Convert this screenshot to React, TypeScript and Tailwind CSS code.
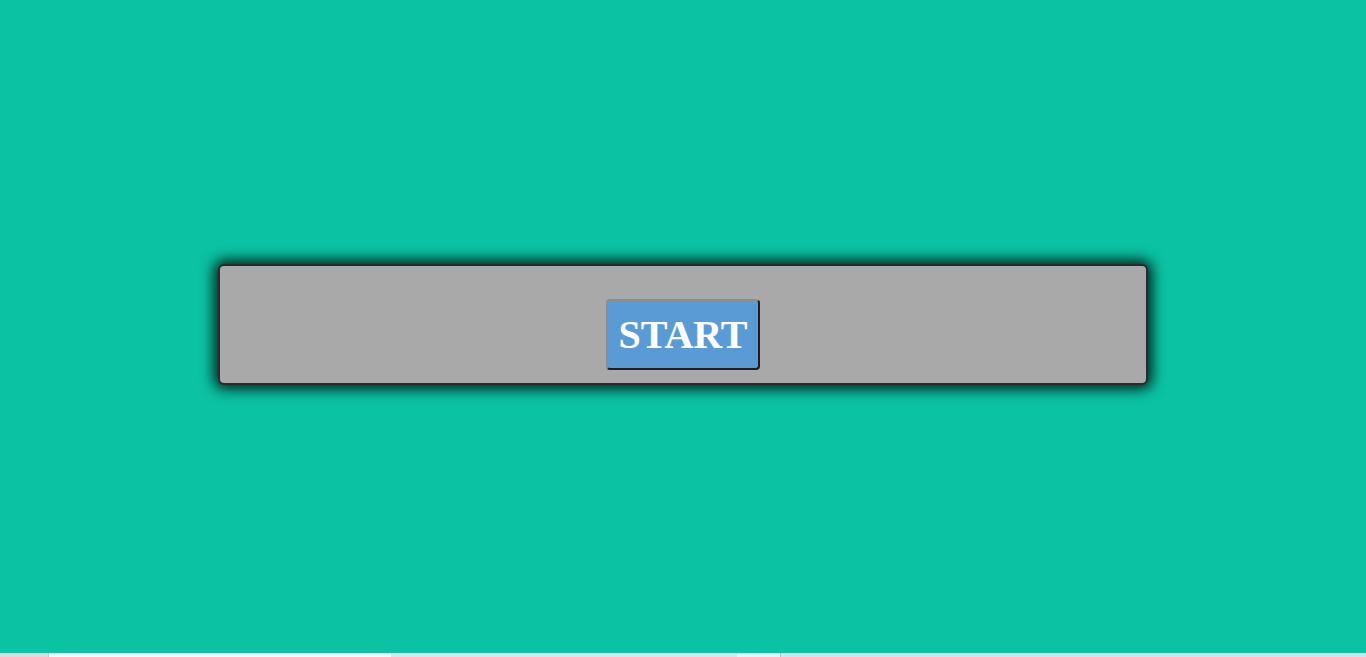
export default function App() {
  return (
    <div className="min-h-screen bg-[#0bc2a3] overflow-hidden">
      <section className="h-[653px] flex items-center justify-center pb-[4px]">
        <div className="w-[930px] h-[121px] bg-[#a9a9a9] border-2 border-[#2a2a2a] rounded-[6px] shadow-[0_0_14px_4px_rgba(0,0,0,0.85)] flex justify-center pt-[33px]">
          <button
            type="button"
            className="h-[71px] px-[10px] bg-[#5b9bd5] text-white font-bold text-[40px] leading-none rounded-[4px] border-2 border-t-[#8c8c8c] border-l-[#8c8c8c] border-r-[#1e1e1e] border-b-[#1e1e1e]"
            style={{ fontFamily: '"Liberation Serif", "Times New Roman", serif' }}
          >
            START
          </button>
        </div>
      </section>
      <div className="flex h-[4px]">
        <div className="w-[48px] bg-[#dcdcdc]" />
        <div className="w-[343px] bg-[#f7fbfb] border-l border-[#c8c8c8]" />
        <div className="w-[346px] bg-[#d9e6eb]" />
        <div className="w-[44px] bg-[#eaf3f6] border-r border-[#b8c4c8]" />
        <div className="flex-1 bg-[#d3e5ea]" />
      </div>
    </div>
  );
}
